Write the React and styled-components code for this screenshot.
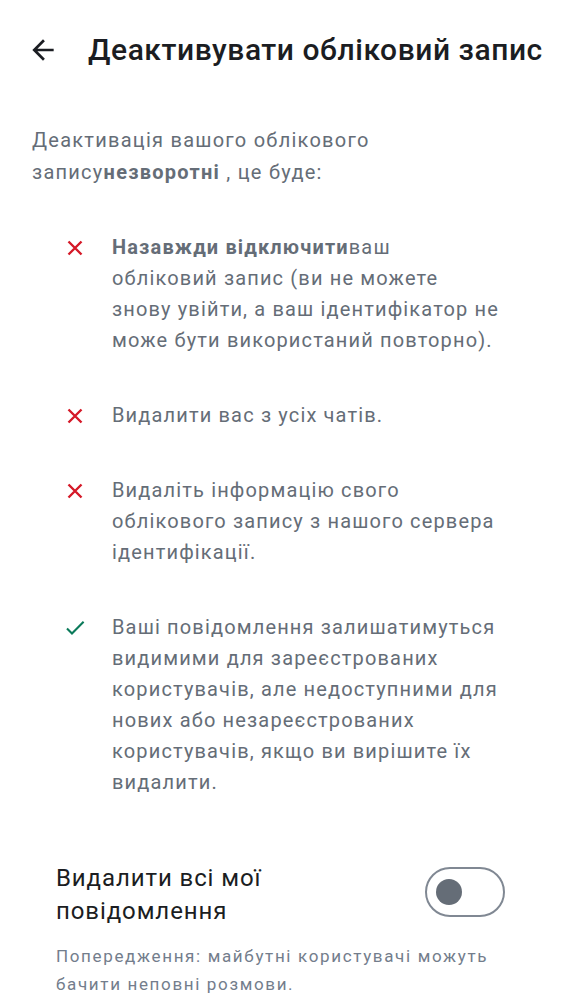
import React from "react";
import styled, { createGlobalStyle } from "styled-components";

const GlobalStyle = createGlobalStyle`
  body {
    margin: 0;
    background: #ffffff;
    font-family: Roboto, "Noto Sans", sans-serif;
  }
`;

const Page = styled.div`
  width: 562px;
  min-height: 1000px;
  background: #ffffff;
`;

const Header = styled.header`
  display: flex;
  align-items: center;
  gap: 29px;
  height: 40px;
  padding: 30px 0 0 27px;
`;

const BackButton = styled.button`
  display: flex;
  width: 32px;
  height: 32px;
  padding: 0;
  border: none;
  background: none;
  color: #1b1d22;

  & > svg {
    width: 32px;
    height: 32px;
  }
`;

const Title = styled.h1`
  margin: 0;
  font-size: 30px;
  font-weight: 500;
  line-height: 40px;
  letter-spacing: 0.55px;
  color: #1b1d22;
  white-space: nowrap;
`;

const Content = styled.main`
  padding: 54px 32px 0;
`;

const Intro = styled.p`
  margin: 0;
  font-size: 20px;
  line-height: 32px;
  letter-spacing: 1.25px;
  color: #656d77;
  max-width: 498px;

  & > b {
    font-weight: 700;
  }
`;

const List = styled.ul`
  display: flex;
  flex-direction: column;
  gap: 44px;
  margin: 44px 0 0;
  padding: 0 0 0 31px;
  list-style: none;
`;

const Item = styled.li`
  display: grid;
  grid-template-columns: 24px 390px;
  column-gap: 25px;
  font-size: 20px;
  line-height: 31px;
  letter-spacing: 1.15px;
  color: #656d77;

  & b {
    font-weight: 700;
  }
`;

const Mark = styled.span`
  display: flex;
  width: 24px;
  height: 24px;
  margin-top: 4px;
  color: ${({ $ok }) => ($ok ? "#0b7a5a" : "#d51928")};

  & > svg {
    width: 24px;
    height: 24px;
  }
`;

const ToggleRow = styled.div`
  display: flex;
  align-items: flex-start;
  justify-content: space-between;
  margin-top: 64px;
  padding: 0 25px 0 24px;
`;

const ToggleLabel = styled.span`
  max-width: 340px;
  font-size: 24px;
  line-height: 33px;
  letter-spacing: 0.9px;
  color: #1b1d22;
`;

const Switch = styled.button`
  box-sizing: border-box;
  display: flex;
  align-items: center;
  width: 80px;
  height: 50px;
  margin-top: 5px;
  padding: 0 0 0 9px;
  border: 2px solid #808893;
  border-radius: 25px;
  background: #ffffff;
`;

const Knob = styled.span`
  width: 26px;
  height: 26px;
  border-radius: 50%;
  background: #656d77;
`;

const Warning = styled.p`
  margin: 14px 0 0;
  padding: 0 24px;
  font-size: 17px;
  line-height: 28px;
  letter-spacing: 1.65px;
  color: #737d8c;
`;

const CloseIcon = () => (
  <svg viewBox="0 0 24 24" fill="none" stroke="currentColor" strokeWidth="2.4">
    <path d="M5.5 5.5 18.5 18.5M18.5 5.5 5.5 18.5" />
  </svg>
);

const CheckIcon = () => (
  <svg viewBox="0 0 24 24" fill="none" stroke="currentColor" strokeWidth="2.1">
    <path d="M4 12.4 9 17.4 20.6 5.8" />
  </svg>
);

const items = [
  {
    ok: false,
    text: (
      <>
        <b>Назавжди відключити</b>ваш обліковий запис (ви не можете знову
        увійти, а ваш ідентифікатор не може бути використаний повторно).
      </>
    ),
  },
  { ok: false, text: "Видалити вас з усіх чатів." },
  {
    ok: false,
    text: "Видаліть інформацію свого облікового запису з нашого сервера ідентифікації.",
  },
  {
    ok: true,
    text: "Ваші повідомлення залишатимуться видимими для зареєстрованих користувачів, але недоступними для нових або незареєстрованих користувачів, якщо ви вирішите їх видалити.",
  },
];

const App = () => (
  <Page>
    <GlobalStyle />
    <Header>
      <BackButton aria-label="Назад">
        <svg viewBox="0 0 24 24" fill="currentColor">
          <path d="M20 11H7.83l5.59-5.59L12 4l-8 8 8 8 1.41-1.41L7.83 13H20v-2z" />
        </svg>
      </BackButton>
      <Title>Деактивувати обліковий запис</Title>
    </Header>
    <Content>
      <Intro>
        Деактивація вашого облікового запису<b>незворотні</b> , це буде:
      </Intro>
      <List>
        {items.map((item, i) => (
          <Item key={i}>
            <Mark $ok={item.ok}>{item.ok ? <CheckIcon /> : <CloseIcon />}</Mark>
            <span>{item.text}</span>
          </Item>
        ))}
      </List>
      <ToggleRow>
        <ToggleLabel>Видалити всі мої повідомлення</ToggleLabel>
        <Switch role="switch" aria-checked="false">
          <Knob />
        </Switch>
      </ToggleRow>
      <Warning>
        Попередження: майбутні користувачі можуть бачити неповні розмови.
      </Warning>
    </Content>
  </Page>
);

export default App;
